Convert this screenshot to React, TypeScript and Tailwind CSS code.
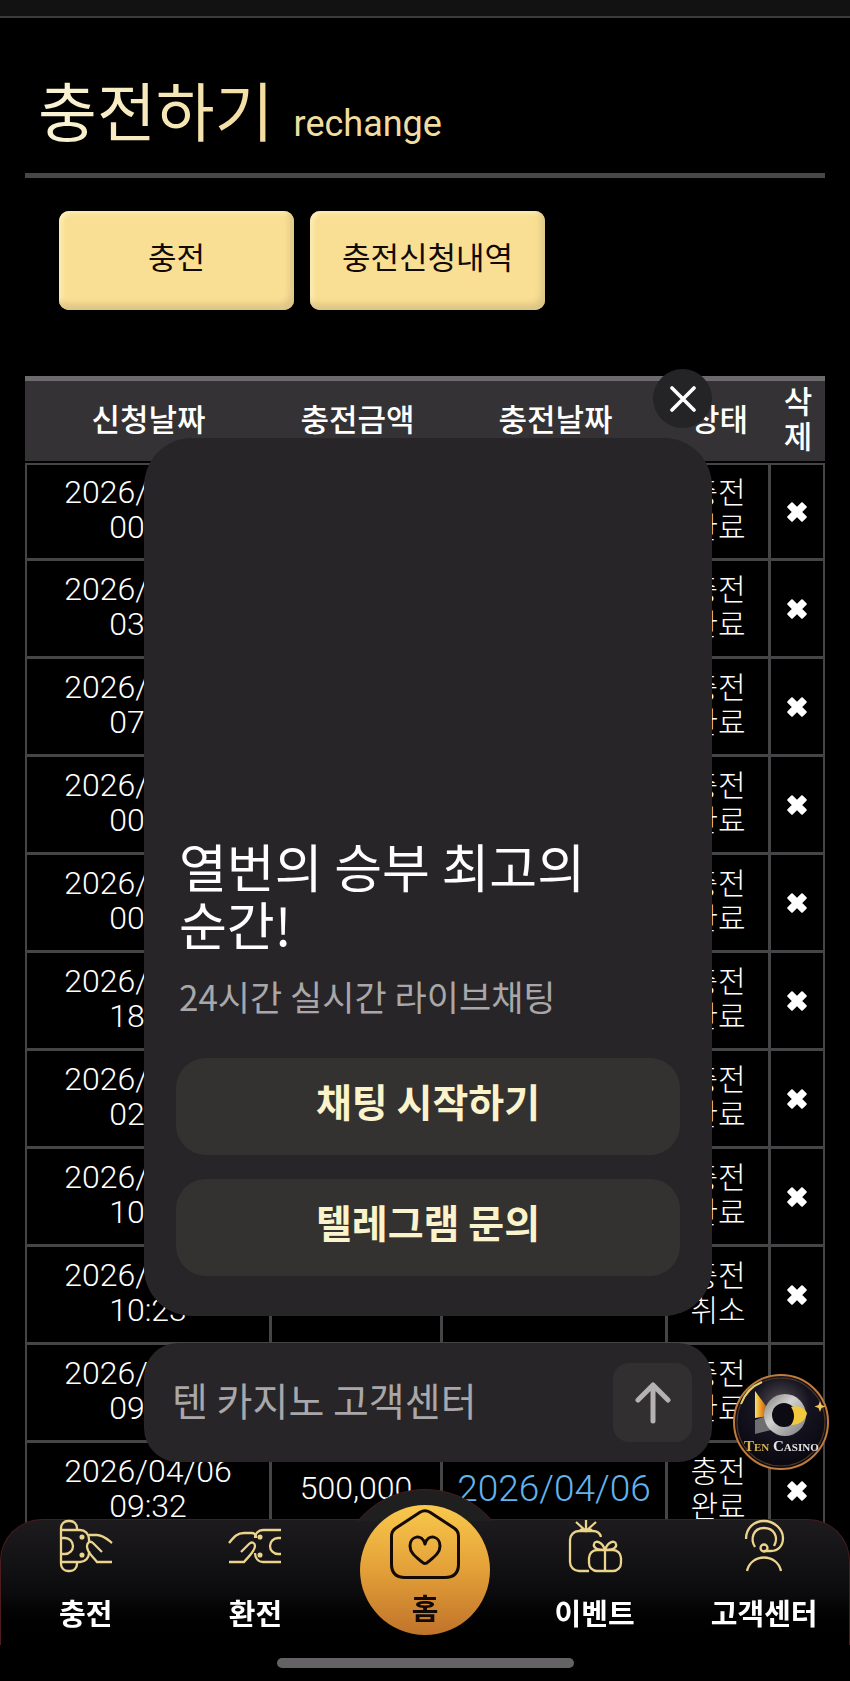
import type { ReactNode } from "react";

const history = [
  { date: "2026/04/10", time: "00:14", amount: "", done: "", status: "충전 완료" },
  { date: "2026/04/09", time: "03:41", amount: "", done: "", status: "충전 완료" },
  { date: "2026/04/08", time: "07:25", amount: "", done: "", status: "충전 완료" },
  { date: "2026/04/08", time: "00:52", amount: "", done: "", status: "충전 완료" },
  { date: "2026/04/08", time: "00:07", amount: "", done: "", status: "충전 완료" },
  { date: "2026/04/07", time: "18:30", amount: "", done: "", status: "충전 완료" },
  { date: "2026/04/07", time: "02:46", amount: "", done: "", status: "충전 완료" },
  { date: "2026/04/06", time: "10:58", amount: "", done: "", status: "충전 완료" },
  { date: "2026/04/06", time: "10:23", amount: "", done: "", status: "충전 취소" },
  { date: "2026/04/06", time: "09:54", amount: "", done: "", status: "충전 완료" },
  { date: "2026/04/06", time: "09:32", amount: "500,000", done: "2026/04/06", status: "충전 완료" },
];

const cell = "border-[#454446] border-b-[3px] border-r-[3px] group-first:border-t-2 p-0 pb-1 text-center";

function DeleteIcon() {
  return (
    <svg viewBox="0 0 22 22" className="size-[22px]" fill="#fff" stroke="#fff" strokeWidth="2" strokeLinejoin="round" aria-hidden="true">
      <path d="M6 2.2 11 7.2 16 2.2 19.8 6 14.8 11 19.8 16 16 19.8 11 14.8 6 19.8 2.2 16 7.2 11 2.2 6Z" />
    </svg>
  );
}

function DepositIcon() {
  return (
    <>
      <path d="M1 8v36M1 8a7 7 0 0 1 7-7h2a7 7 0 0 1 7 7v2M1 44a7 7 0 0 0 7 7h2a7 7 0 0 0 7-7v-2" />
      <path d="M1 10h19c5 0 9 4 9 9v3M1 42h19c5 0 9-4 9-9v-2" />
      <path d="M1 18h4a8 8 0 0 1 0 16H1" />
      <path d="M29 15h8c6 0 10 4 15 8M42 32l-9-9c-3-3-6 0-6 3 0 7 5 9 10 16h15" />
      <circle cx="22" cy="17" r="1.4" fill="currentColor" />
      <circle cx="22" cy="35" r="1.4" fill="currentColor" />
    </>
  );
}

function WithdrawIcon() {
  return (
    <>
      <path d="M52 10H34c-5 0-8 4-8 8M52 42H34c-5 0-8-4-8-9" />
      <path d="M52 18h-3a8 8 0 0 0 0 16h3" />
      <path d="M0 23c5-6 8-10 15-10h8c3 0 4 2 4 5M12 32l8-8c3-3 6-1 6 2 0 5-5 9-11 16H0" />
      <circle cx="31" cy="17" r="1.4" fill="currentColor" />
      <circle cx="31" cy="35" r="1.4" fill="currentColor" />
    </>
  );
}

function EventIcon() {
  return (
    <>
      <path d="M20 51H10a9 9 0 0 1-9-9V20a9 9 0 0 1 9-9h14c4 0 7 2 8 6" />
      <path d="M17 11V0M17 11 7 2M17 11l10-9M11 11c1-2 3-3 6 0 3-3 5-2 6 0" />
      <rect x="20" y="30" width="32" height="21" rx="8" />
      <path d="M36 51V30M36 30c-9 0-12-3-11-6 1-4 8-3 11 6ZM36 30c9 0 12-3 11-6-1-4-8-3-11 6Z" />
    </>
  );
}

function SupportIcon() {
  return (
    <>
      <path d="M8 19C8 8 16 1 26 1s19 8 19 17c0 8-5 13-12 13h-7" />
      <path d="M17 27c-5-8-2-19 9-19 10 0 15 9 10 18" />
      <circle cx="26" cy="28" r="3.5" />
      <path d="M9 51c4-18 30-18 34 0" />
    </>
  );
}

function NavItem({ label, children }: { label: string; children: ReactNode }) {
  return (
    <a href="#" className="flex flex-col items-center gap-5">
      <svg viewBox="0 0 52 52" className="size-[52px] overflow-visible text-[#ecd48c]" fill="none" stroke="currentColor" strokeWidth="2.3" aria-hidden="true">
        {children}
      </svg>
      <span className="text-[29px] leading-10 font-bold whitespace-nowrap text-white">{label}</span>
    </a>
  );
}

function CasinoBadge() {
  return (
    <a href="#" aria-label="TEN CASINO" className="fixed right-[21px] bottom-[211px] z-20 size-24">
      <svg viewBox="0 0 96 96" className="size-24">
        <defs>
          <radialGradient id="badgeBg" cx="50%" cy="32%" r="62%">
            <stop offset="0" stopColor="#5a5358" />
            <stop offset="0.5" stopColor="#15131f" />
            <stop offset="1" stopColor="#0a0810" />
          </radialGradient>
          <linearGradient id="silver" x1="0" y1="0" x2="1" y2="1">
            <stop offset="0" stopColor="#7b7b7a" />
            <stop offset="0.4" stopColor="#d2d2d0" />
            <stop offset="1" stopColor="#77787a" />
          </linearGradient>
          <linearGradient id="gold" x1="0" y1="0" x2="1" y2="0">
            <stop offset="0" stopColor="#f7e36a" />
            <stop offset="0.5" stopColor="#e88a1c" />
            <stop offset="1" stopColor="#6b5a3c" />
          </linearGradient>
        </defs>
        <circle cx="48" cy="48" r="47" fill="url(#badgeBg)" stroke="#c07c3c" strokeWidth="2" />
        <circle cx="48" cy="48" r="44" fill="none" stroke="#4f3624" strokeWidth="1.2" />
        <path d="M8 30C12 19 19 12 29 8" stroke="#e2d06a" strokeWidth="2" fill="none" />
        <path d="M22 17v27l14-2v-6Z" fill="url(#gold)" />
        <path d="M22 60V46l14-5 6 14Z" fill="#6f6f72" />
        <circle cx="52" cy="41" r="21" fill="url(#silver)" />
        <circle cx="51" cy="41" r="12" fill="#0c0a12" />
        <path d="M58 33c8-2 13 1 16 6-1 6-6 12-16 12 4-6 4-12 0-18Z" fill="#f1c93f" />
        <path d="m87 27 1.500 4 4 1.500-4 1.500-1.500 4-1.500-4-4-1.500 4-1.500Z" fill="#f4c45a" />
        <g fontFamily="Liberation Serif, serif" fontWeight="700">
          <text x="11" y="77" fontSize="15" fill="#d8b54c">T<tspan fontSize="11">EN</tspan></text>
          <text x="40" y="77" fontSize="15" fill="#e6e2e4">C<tspan fontSize="11">ASINO</tspan></text>
        </g>
      </svg>
    </a>
  );
}

function ChatWidget() {
  return (
    <aside className="fixed right-[138px] bottom-[219px] left-36 z-10">
      <section className="relative mb-[27px] flex min-h-[878px] flex-col justify-end rounded-[48px] bg-[#272527] px-8 pb-10">
        <button type="button" aria-label="닫기" className="absolute -top-[69px] right-0 flex size-[59px] items-center justify-center rounded-full bg-[#242326]">
          <svg viewBox="0 0 26 26" className="size-[26px]" stroke="#fff" strokeWidth="3.6" strokeLinecap="round" aria-hidden="true">
            <path d="m2 2 22 22M24 2 2 24" />
          </svg>
        </button>
        <h2 className="pl-[3px] text-[52px] leading-[58px] text-white">
          열번의 승부 최고의
          <br />
          순간!
        </h2>
        <p className="mt-[18px] pl-[3px] text-[35px] leading-[50px] text-[#a9a7a9]">24시간 실시간 라이브채팅</p>
        <div className="mt-[37px] flex flex-col gap-6">
          <button type="button" className="h-[97px] rounded-[30px] bg-[#343230] pb-3 text-[39px] font-bold text-[#fbf3cb]">
            채팅 시작하기
          </button>
          <button type="button" className="h-[97px] rounded-[30px] bg-[#343230] pb-3 text-[39px] font-bold text-[#fbf3cb]">
            텔레그램 문의
          </button>
        </div>
      </section>
      <form className="flex h-[119px] items-center rounded-[34px] bg-[#272527] pr-5 pl-7">
        <input
          type="text"
          aria-label="텐 카지노 고객센터"
          placeholder="텐 카지노 고객센터"
          className="min-w-0 flex-1 bg-transparent pb-[6px] text-[39px] text-white outline-none placeholder:text-[#a9a7a9]"
        />
        <button type="button" aria-label="보내기" className="flex size-[79px] items-center justify-center rounded-2xl bg-[#322f31]">
          <svg viewBox="0 0 36 42" className="h-[42px] w-9" fill="none" stroke="#b5b2b4" strokeWidth="5" strokeLinecap="round" strokeLinejoin="round" aria-hidden="true">
            <path d="M18 39V3M3 18 18 3l15 15" />
          </svg>
        </button>
      </form>
    </aside>
  );
}

function BottomNav() {
  return (
    <nav className="fixed inset-x-0 bottom-0 z-30 h-[162px] bg-transparent">
      <div className="relative h-[126px] rounded-t-[42px] border-x border-t border-[#4c1c1e] bg-linear-to-b from-[#1d1b1d] via-[#0b0b0d] via-60% to-black">
        <div className="absolute bottom-full left-1/2 -mb-px h-8 w-44 -translate-x-1/2 overflow-hidden">
          <div className="size-44 rounded-full border border-[#4c1c1e] bg-[#1f1f1f]" />
        </div>
        <div className="relative grid grid-cols-5">
          <NavItem label="충전"><DepositIcon /></NavItem>
          <NavItem label="환전"><WithdrawIcon /></NavItem>
          <a href="#" className="relative">
            <div className="absolute -top-[15px] left-1/2 flex size-[130px] -translate-x-1/2 flex-col items-center rounded-full bg-linear-to-b from-[#f9c94c] via-[#e3a038] to-[#c0732a] pt-1">
              <svg viewBox="0 0 70 70" className="size-[70px]" fill="none" stroke="#140a05" strokeWidth="3" strokeLinejoin="round" aria-hidden="true">
                <path d="M30 3.200Q35 .2 40 3.200L64 19Q68.500 22 68.500 27V55Q68.500 68.500 55 68.500H15Q1.500 68.500 1.500 55V27Q1.500 22 6 19Z" />
                <path d="M35 35C32 24 20 27 20 37c0 7 6 11 12 16q3 3 6 0c6-5 12-9 12-16 0-10-12-13-15-2Z" />
              </svg>
              <span className="mt-2 text-[29px] leading-10 font-bold text-[#140a05]">홈</span>
            </div>
          </a>
          <NavItem label="이벤트"><EventIcon /></NavItem>
          <NavItem label="고객센터"><SupportIcon /></NavItem>
        </div>
      </div>
      <div className="flex h-9 justify-center bg-black pt-[13px]">
        <div className="h-[10px] w-[297px] rounded-full bg-[#646264]" />
      </div>
    </nav>
  );
}

export default function App() {
  return (
    <div className="h-screen overflow-hidden bg-black font-['Noto_Sans_CJK_KR',sans-serif] text-white">
      <div className="h-[18px] border-b-2 border-[#3b3b3b] bg-[#121212]" />
      <main className="px-[25px]">
        <header className="flex items-baseline gap-5 border-b-[5px] border-[#474649] pt-[45px] pb-5 pl-[13px]">
          <h1 className="bg-linear-to-r from-[#faf4d6] to-[#f3dc9c] bg-clip-text text-[64px] leading-[90px] text-transparent">충전하기</h1>
          <span className="font-[Roboto,sans-serif] text-[36px] leading-10 text-[#f0dda0]">rechange</span>
        </header>
        <div className="mt-[33px] flex gap-4 pl-[34px]">
          {["충전", "충전신청내역"].map((label) => (
            <button
              key={label}
              type="button"
              className="h-[99px] w-[235px] rounded-[10px] bg-[#f9df93] pb-2 text-[31px] text-[#140a05] shadow-[inset_-4px_-6px_6px_#dcc587,inset_3px_2px_4px_#fdeebb]"
            >
              {label}
            </button>
          ))}
        </div>
        <table className="mt-[66px] w-full table-fixed border-separate border-spacing-0">
          <thead>
            <tr className="h-[87px] bg-[#343234] text-[31px] leading-[35px]">
              {[
                ["신청날짜", "px-2"],
                ["충전금액", "w-[171px] px-2"],
                ["충전날짜", "w-[225px] px-2"],
                ["상태", "w-[103px] px-2"],
                ["삭 제", "w-[54px] px-2"],
              ].map(([label, size]) => (
                <th key={label} className={`${size} border-t-[5px] border-b-2 border-t-[#6c6a6c] border-b-black pt-0 pb-2 text-center font-medium`}>
                  {label}
                </th>
              ))}
            </tr>
          </thead>
          <tbody className="font-[Roboto,'Noto_Sans_CJK_KR',sans-serif] text-[32px] leading-[35px] font-light">
            {history.map((row) => (
              <tr key={row.time} className="group h-[98px]">
                <td className={`${cell} border-l-2`}>
                  {row.date}
                  <br />
                  {row.time}
                </td>
                <td className={cell}>{row.amount}</td>
                <td className={`${cell} text-[37px] text-[#63b3ec]`}>{row.done}</td>
                <td className={`${cell} px-5 text-[30px]`}>{row.status}</td>
                <td className="border-r-2 border-b-[3px] border-[#454446] p-0 group-first:border-t-2">
                  <button type="button" aria-label="삭제" className="mx-auto flex">
                    <DeleteIcon />
                  </button>
                </td>
              </tr>
            ))}
          </tbody>
        </table>
      </main>
      <ChatWidget />
      <CasinoBadge />
      <BottomNav />
    </div>
  );
}
